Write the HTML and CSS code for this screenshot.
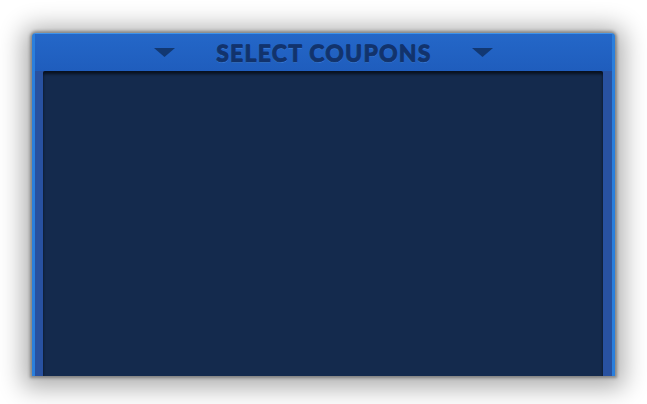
FILE: index.html
```html
<!DOCTYPE html>
<html>
<head>
<meta charset="utf-8">
<link rel="stylesheet" href="styles.css">
</head>
<body>
<div class="panel">
  <div class="header">
    <svg class="tri" width="21" height="9" viewBox="0 0 21 9"><polygon points="0,0 21,0 10.5,9" fill="#123872"/></svg>
    <h1 class="title">SELECT COUPONS</h1>
    <svg class="tri" width="21" height="9" viewBox="0 0 21 9"><polygon points="0,0 21,0 10.5,9" fill="#123872"/></svg>
  </div>
  <div class="body">
    <div class="content"></div>
  </div>
</div>
</body>
</html>
```
FILE: styles.css
```css
html, body {
  margin: 0;
  padding: 0;
  background: #ffffff;
  width: 647px;
  height: 404px;
  overflow: hidden;
}
.panel {
  margin: 33px 0 0 32px;
  width: 583px;
  height: 343px;
  border-radius: 4px 4px 0 0;
  background: #2060c2;
  box-shadow: 0 0 3px 2px rgba(70,70,70,0.5), 0 3px 24px 9px rgba(0,0,0,0.32);
  display: flex;
  flex-direction: column;
  border-top: 1px solid #3f93ea;
  border-left: 3px solid #2b7fdc;
  border-right: 3px solid #2b7fdc;
  box-sizing: border-box;
}
.header {
  height: 37px;
  display: flex;
  align-items: center;
  justify-content: center;
  gap: 41px;
  background: linear-gradient(#2467c8, #1f5dbd);
}
.tri {
  display: block;
}
.title {
  margin: 0;
  font-family: Lato, "Liberation Sans", sans-serif;
  font-weight: 900;
  font-size: 23px;
  letter-spacing: 1.2px;
  color: #12336c;
  -webkit-text-stroke: 0.6px #12336c;
  text-shadow: 0 1px 0 rgba(80,150,240,0.5), 0 -1px 0 rgba(5,20,60,0.55);
  line-height: 1;
  margin-top: 2px;
  margin-right: -1px;
}
.body {
  flex: 1;
  display: flex;
  padding: 0 9px 0 8px;
  background: #2851a0;
}
.content {
  flex: 1;
  background: #142a4d;
  box-shadow: inset 0 3px 3px rgba(0,0,0,0.6);
  border-radius: 2px 2px 0 0;
}
```
